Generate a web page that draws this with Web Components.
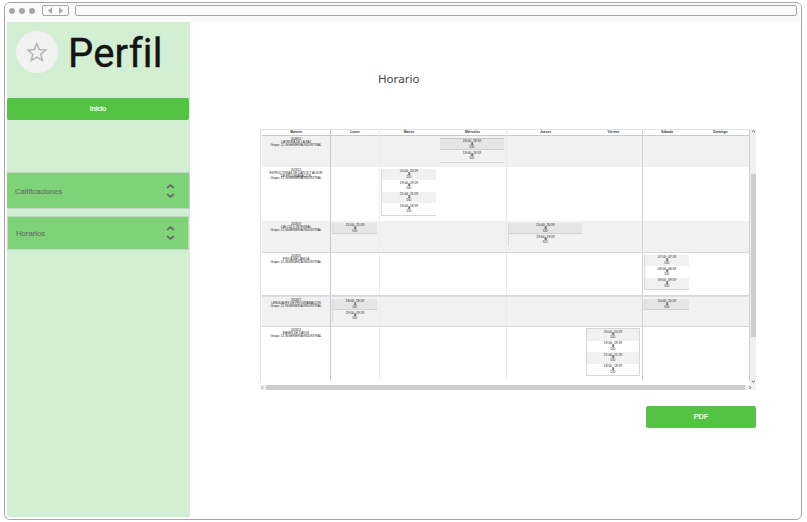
<!DOCTYPE html>
<html lang="es"><head><meta charset="utf-8"><title>Perfil</title>
<style>body{margin:0;width:807px;height:522px;overflow:hidden;background:#fff;font-family:"Liberation Sans",Arial,sans-serif}</style></head>
<body>
<browser-frame>
  <profile-sidebar slot="side">
    <green-button>Inicio</green-button>
    <select-box label="Calificaciones" style="margin-top:52px;height:37px"></select-box>
    <select-box class="inset" label="Horarios" style="margin-top:7px;height:34px"></select-box>
  </profile-sidebar>
  <schedule-page>
    <schedule-table></schedule-table>
    <green-button slot="action" class="pdf">PDF</green-button>
  </schedule-page>
</browser-frame>
<script>
const define=(name,html,init)=>customElements.define(name,class extends HTMLElement{
  constructor(){super();this.attachShadow({mode:'open'}).innerHTML=html;}
  connectedCallback(){if(init)init(this,this.shadowRoot);}
});

define('browser-frame',`<style>
:host{display:flex;box-sizing:border-box;width:798px;height:518px;margin:2px 0 0 4px;border:1px solid #a6a6a6;border-radius:6px;flex-direction:column;background:#fff;overflow:hidden}
.bar{height:19px;background:#fafafa;display:flex;align-items:flex-start;flex:none}
.dots{display:flex;gap:4.2px;margin:4.5px 0 0 4px}
i{width:6px;height:6px;border-radius:50%;background:#a6a6a6}
svg{margin:2px 0 0 6.6px;flex:none}
.url{flex:1;height:9px;margin:2px 4px 0 6px;border:1px solid #a6a6a6;border-radius:2px}
.body{flex:1;display:flex;padding:0 0 2px 2px}
</style><div class="bar"><div class="dots"><i></i><i></i><i></i></div>
<svg width="27" height="11" viewBox="0 0 27 11"><rect x=".5" y=".5" width="26" height="10" rx="1.5" fill="#fafafa" stroke="#a6a6a6"/><path d="M10 2.3V9L6 5.7zM17 2.3V9l4-3.3z" fill="#a6a6a6"/></svg>
<div class="url"></div></div><div class="body"><slot name="side"></slot><slot></slot></div>`);

define('profile-sidebar',`<style>
:host{display:block;width:183px;background:#d3efd3;flex:none}
.head{display:flex;height:76px}
.avatar{width:42px;height:42px;border-radius:50%;background:#f2f2f2;margin:9px 0 0 9px;flex:none}
h1{margin:3px 0 0 10px;font:400 40px/58px Roboto,sans-serif;color:#141414;letter-spacing:.2px;-webkit-text-stroke:.4px #141414}
</style><div class="head"><svg class="avatar" viewBox="0 0 42 42"><path d="M20.8 12.7l2.5 5.9 6.4.5-4.9 4.2 1.5 6.2-5.5-3.3-5.5 3.3 1.5-6.2-4.9-4.2 6.4-.5z" fill="none" stroke="#b3b3b3" stroke-width="1.5"/></svg><h1>Perfil</h1></div><slot></slot>`);

define('green-button',`<style>
:host{display:flex;align-items:center;justify-content:center;box-sizing:border-box;width:182px;height:22px;border-radius:2px;background:#54c343;color:#fff;font-size:7px;padding-bottom:1px;-webkit-text-stroke:.2px #fff}
:host(.pdf){width:110px;font-size:7.2px}
</style><slot></slot>`);

define('select-box',`<style>
:host{display:flex;box-sizing:border-box;width:183px;background:#7ed277;border:1px solid #c8d3ca;border-left:0;align-items:center;justify-content:space-between;padding:0 14px 0 8px;color:#667068;font-size:7.7px}
:host(.inset){width:182px;padding-left:8px;padding-right:13px;border-left:1px solid #c8d3ca}
span{padding-top:1px;-webkit-text-stroke:.1px #667068}
</style><span></span><svg width="9" height="16" viewBox="0 0 9 16" fill="none" stroke="#667068" stroke-width="2"><path d="M1.2 5l3.3-3 3.3 3M1.2 11l3.3 3 3.3-3"/></svg>`,
(e,s)=>s.querySelector('span').textContent=e.getAttribute('label'));

define('schedule-page',`<style>
:host{display:block;flex:1}
h2{margin:47px 0 0 188px;height:21px;font:400 11.6px/20px "Noto Sans",sans-serif;color:#444}
.table{margin:39px 0 0 70px}
.action{margin:16px 0 0 456px}
</style><h2>Horario</h2><div class="table"><slot></slot></div><div class="action"><slot name="action"></slot></div>`);

define('time-slot',`<style>
:host{display:block;height:11.5px;box-sizing:border-box;padding-top:1.9px;font-size:3.3px;line-height:2.6px;text-align:center;color:#222}
:host([shade="1"]){background:#f1f1f1}
:host([shade="2"]){background:#e5e5e5;border-bottom:1px solid #cfd2d5}
div{white-space:nowrap}
</style><div class="t"></div><div class="a">A</div><div class="b">DD</div>`,
(e,s)=>{s.querySelector('.t').textContent=e.getAttribute('time');});

const days=['Materia','Lunes','Martes','Miércoles','Jueves','Viernes','Sábado','Domingo'];
const rows=[
 {h:31,g:1,m:['204801','CÁTEDRA DE LA PAZ','Grupo: 12-INGENIERÍA INDUSTRIAL'],d:{3:[['18:00_18:59',2],['19:00_19:59',0]]}},
 {h:54,g:0,m:['205821','ESTRUCTURAS DE DATOS Y ALGOR','DE PROGRAMACIÓN','Grupo: 12-INGENIERÍA INDUSTRIAL'],d:{2:[['20:00_20:59',1],['19:00_19:59',0],['21:00_21:59',1],['18:00_18:59',0]]}},
 {h:32,g:1,m:['205807','CÁLCULO INTEGRAL','Grupo: 12-INGENIERÍA INDUSTRIAL'],d:{1:[['21:00_21:59',2]],4:[['20:00_20:59',2],['19:00_19:59',0]]}},
 {h:43,g:0,m:['205825','FÍSICA MECÁNICA','Grupo: 12-INGENIERÍA INDUSTRIAL'],d:{6:[['07:00_07:59',1],['08:00_08:59',0],['09:00_09:59',1]]}},
 {h:31,g:1,m:['205827','LENGUAJES DE PROGRAMACIÓN','Grupo: 12-INGENIERÍA INDUSTRIAL'],d:{1:[['18:00_18:59',2],['19:00_19:59',0]],6:[['10:00_10:59',2]]}},
 {h:54,g:0,m:['205816','BASES DE DATOS','Grupo: 12-INGENIERÍA INDUSTRIAL'],d:{5:[['20:00_20:59',1],['19:00_19:59',0],['21:00_21:59',1],['18:00_18:59',0]]}}
];
const cells=r=>days.map((_,i)=>{
  if(i===0)return `<div class="c m">${r.m.map(t=>`<div>${t}</div>`).join('')}</div>`;
  const list=r.d[i];
  return `<div class="c c${i}">${list?`<div class="box b${list.length}">${list.map(x=>`<time-slot time="${x[0]}" shade="${x[1]}"></time-slot>`).join('')}</div>`:''}</div>`;
}).join('');
define('schedule-table',`<style>
:host{display:grid;grid-template-columns:490px 6px;grid-template-rows:256px 5px;width:496px;height:261px}
.grid{border:1px solid #dfe1e3;border-right:0;border-bottom:0;box-sizing:border-box;height:252px;width:490px;padding-left:1px}
.row{display:grid;grid-template-columns:69px 49px 59px 68px 78px 58px 49px 58px;box-sizing:border-box}
.head{height:6px;font-size:3.3px;line-height:5.6px;font-weight:700;color:#333;text-align:center;border-bottom:1px solid #c9cdd0}
.row.body{border-bottom:1px solid #d4d8da}
.g{background:#f1f1f1}
.row.body.r0,.row.body.r1,.row.body.r5{border-bottom:0}
.r4{border-top:1px solid #dde0e2}
.c{box-sizing:border-box;border-right:1px solid transparent;min-width:0}
.m{border-color:#c5c8cb;padding-top:2.3px;font-size:3.05px;line-height:2.7px;text-align:center;color:#222;white-space:nowrap}
.c3{border-color:#e9ebec}.c5,.c7{border-color:#ced2d5}
.c1{border-color:#eceeef}
.box{margin:1.5px 2px 0 1px;border-left:1px solid #d8dbdd;box-sizing:border-box}
.b3,.b4{border:1px solid #d4d8da;margin-top:1px}
.b3,.r1 .b4{border-right:0;border-top:0;margin-top:1.5px}
.r0 .box{border-left:0;border-top:1px solid #c9c9c9;border-bottom:1px solid #d4d8da}
.v{background:#f0f0f0;display:flex;flex-direction:column;align-items:center;padding-bottom:1px}
.v b{width:5px;height:163px;margin-top:40px;background:#cdcdcd;align-self:flex-end;flex:none}
.h{grid-column:1/3;background:#f0f0f0;display:flex;align-items:center;justify-content:space-between}
.h b{width:479px;height:5px;background:#cdcdcd}
svg{width:5px;height:5px;fill:none;stroke:#444;stroke-width:.8;flex:none}
</style>
<div class="grid"><div class="row head">${days.map((d,i)=>`<div class="c ${i?'c'+i:''}" ${i?'':'style="border-color:#c5c8cb"'}>${d}</div>`).join('')}</div>
${rows.map((r,i)=>`<div class="row body r${i} ${r.g?'g':''}" style="height:${r.h}px">${cells(r)}</div>`).join('')}</div>
<div class="v"><svg viewBox="0 0 5 5"><path d="M1 3.2l1.5-1.4L4 3.2"/></svg><b></b><svg style="margin-top:auto" viewBox="0 0 5 5"><path d="M1 1.8l1.5 1.4L4 1.8"/></svg></div>
<div class="h"><svg viewBox="0 0 5 5"><path d="M3.2 1L1.8 2.5 3.2 4" stroke="#999"/></svg><b></b><svg style="width:11px" viewBox="0 0 11 5"><path d="M4.4 1l1.4 1.5L4.4 4"/></svg></div>`);
</script></body></html>
